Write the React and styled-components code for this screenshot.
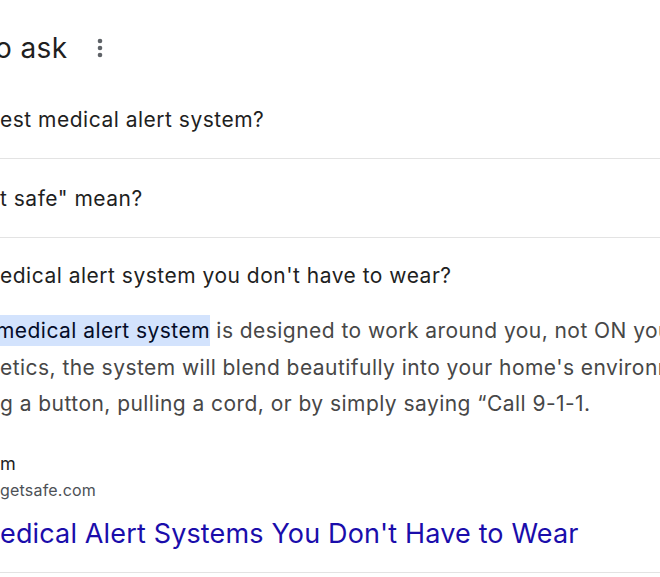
import React from 'react';
import styled, { createGlobalStyle } from 'styled-components';

const Global = createGlobalStyle`
  html, body {
    margin: 0;
    padding: 0;
    background: #fff;
    overflow: hidden;
  }
  body {
    font-family: Inter, Roboto, "Liberation Sans", Arial, sans-serif;
  }
`;

const Page = styled.div`
  width: 660px;
  height: 577px;
  overflow: hidden;
  background: #fff;
`;

const Header = styled.div`
  display: flex;
  align-items: center;
  gap: 22px;
  height: 80px;
  padding-top: 16px;
  box-sizing: border-box;
`;

const Heading = styled.h2`
  margin: 0 0 0 ${p => p.$shift || 0}px;
  font-size: 28px;
  line-height: 36px;
  font-weight: 400;
  letter-spacing: 0.4px;
  color: #1f1f1f;
  white-space: nowrap;
`;

const MoreButton = styled.button`
  display: flex;
  align-items: center;
  justify-content: center;
  width: 20px;
  height: 24px;
  padding: 0;
  border: none;
  background: none;
  color: #5f6368;
`;

const QuestionRow = styled.div`
  display: flex;
  align-items: center;
  height: ${p => p.$height || 78}px;
  border-bottom: ${p => (p.$open ? 'none' : '1px solid #e3e3e3')};
`;

const Question = styled.span`
  margin-left: ${p => p.$shift || 0}px;
  font-size: 21px;
  letter-spacing: 0.5px;
  color: #1f1f1f;
  white-space: nowrap;
`;

const Answer = styled.div`
  border-bottom: 1px solid #e3e3e3;
  padding-bottom: 22px;
`;

const Snippet = styled.p`
  margin: 0;
  font-size: 21px;
  line-height: 36.5px;
  letter-spacing: 0.45px;
  color: #474747;
  white-space: nowrap;
`;

const Line = styled.span`
  display: block;
  margin-left: ${p => p.$shift || 0}px;
`;

const Mark = styled.b`
  font-weight: 400;
  color: #040c28;
  background: #d3e3fd;
  padding: 3px 0;
`;

const Source = styled.div`
  margin-top: 30px;
  display: flex;
  flex-direction: column;
  gap: 5px;
`;

const SiteName = styled.span`
  font-size: 18px;
  line-height: 22px;
  color: #1f1f1f;
`;

const SiteUrl = styled.span`
  font-size: 16px;
  line-height: 20px;
  letter-spacing: 0.2px;
  color: #4d5156;
`;

const TitleLink = styled.a`
  display: block;
  margin-top: 18px;
  font-size: 27px;
  line-height: 32px;
  letter-spacing: 0.15px;
  color: #1a0dab;
  text-decoration: none;
  white-space: nowrap;
`;

function DotsIcon() {
  return (
    <svg width="6" height="20" viewBox="0 0 6 20">
      <circle cx="3" cy="3" r="2.3" fill="currentColor" />
      <circle cx="3" cy="10" r="2.3" fill="currentColor" />
      <circle cx="3" cy="17" r="2.3" fill="currentColor" />
    </svg>
  );
}

export default function App() {
  return (
    <Page>
      <Global />
      <Header>
        <Heading $shift={-5}>o ask</Heading>
        <MoreButton aria-label="More options">
          <DotsIcon />
        </MoreButton>
      </Header>

      <QuestionRow>
        <Question>est medical alert system?</Question>
      </QuestionRow>
      <QuestionRow>
        <Question>t safe" mean?</Question>
      </QuestionRow>
      <QuestionRow $open $height={75}>
        <Question>edical alert system you don't have to wear?</Question>
      </QuestionRow>

      <Answer>
        <Snippet>
          <Line $shift={-4}>
            <Mark>medical alert system</Mark> is designed to work around you, not ON you.
          </Line>
          <Line>etics, the system will blend beautifully into your home's environment.</Line>
          <Line>g a button, pulling a cord, or by simply saying “Call 9-1-1.</Line>
        </Snippet>
        <Source>
          <SiteName>m</SiteName>
          <SiteUrl>getsafe.com</SiteUrl>
        </Source>
        <TitleLink href="#">edical Alert Systems You Don't Have to Wear</TitleLink>
      </Answer>
    </Page>
  );
}
